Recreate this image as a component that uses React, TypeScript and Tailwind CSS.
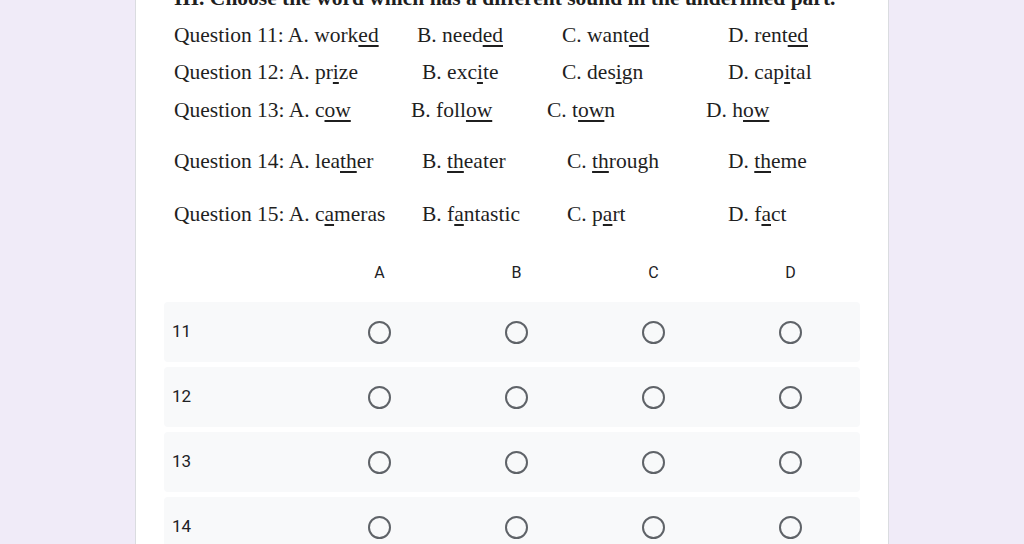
import React from 'react';

type Part = string | { u: string };
type Row = { cells: Part[][]; widths: number[]; top: number };

const rows: Row[] = [
    {
        top: 13,
        widths: [243, 145, 166],
        cells: [
            ['Question 11: A. work', { u: 'ed' }],
            ['B. need', { u: 'ed' }],
            ['C. want', { u: 'ed' }],
            ['D. rent', { u: 'ed' }],
        ],
    },
    {
        top: 13,
        widths: [248, 140, 166],
        cells: [
            ['Question 12: A. pr', { u: 'i' }, 'ze'],
            ['B. exc', { u: 'i' }, 'te'],
            ['C. des', { u: 'i' }, 'gn'],
            ['D. cap', { u: 'i' }, 'tal'],
        ],
    },
    {
        top: 14,
        widths: [237, 136, 159],
        cells: [
            ['Question 13: A. c', { u: 'ow' }],
            ['B. foll', { u: 'ow' }],
            ['C. t', { u: 'ow' }, 'n'],
            ['D. h', { u: 'ow' }],
        ],
    },
    {
        top: 27,
        widths: [248, 145, 161],
        cells: [
            ['Question 14: A. lea', { u: 'th' }, 'er'],
            ['B. ', { u: 'th' }, 'eater'],
            ['C. ', { u: 'th' }, 'rough'],
            ['D. ', { u: 'th' }, 'eme'],
        ],
    },
    {
        top: 29,
        widths: [248, 145, 161],
        cells: [
            ['Question 15: A. c', { u: 'a' }, 'meras'],
            ['B. f', { u: 'a' }, 'ntastic'],
            ['C. p', { u: 'a' }, 'rt'],
            ['D. f', { u: 'a' }, 'ct'],
        ],
    },
];

const Cell = ({ parts }: { parts: Part[] }) => (
    <>
        {parts.map((p, i) =>
            typeof p === 'string' ? (
                <span key={i}>{p}</span>
            ) : (
                <span key={i} className="underline decoration-2 underline-offset-[3px]">{p.u}</span>
            )
        )}
    </>
);

const Radio = () => (
    <div className="w-[23px] h-[23px] rounded-full border-2 border-[#5f6368]"></div>
);

const App = () => {
    const cols = ['A', 'B', 'C', 'D'];
    const labels = ['11', '12', '13', '14'];

    return (
        <div className="w-[1024px] h-[544px] overflow-hidden bg-[#f0ebf8]">
            <div className="ml-[135px] w-[754px] h-[560px] flex flex-col bg-white border-x border-[#dadce0] px-[28px]">
                <div className="pl-[10px] text-[21.5px] leading-[24px] text-[#1f1f1f] -mt-[14px]" style={{ fontFamily: '"Liberation Serif", "Times New Roman", serif' }}>
                    <div className="font-bold whitespace-nowrap">III. Choose the word which has a different sound in the underlined part.</div>
                    {rows.map((row, i) => (
                        <div key={i} className="flex whitespace-nowrap" style={{ marginTop: row.top }}>
                            {row.cells.map((c, j) => (
                                <div key={j} className="shrink-0" style={j < 3 ? { width: row.widths[j] } : undefined}>
                                    <Cell parts={c} />
                                </div>
                            ))}
                        </div>
                    ))}
                </div>

                <div className="mt-[25px] text-[#202124]" style={{ fontFamily: 'Roboto, Arial, sans-serif' }}>
                    <div className="flex h-[44px] items-center">
                        <div className="w-[147px]"></div>
                        {cols.map((c) => (
                            <div key={c} className="w-[137px] text-center text-[16px]">{c}</div>
                        ))}
                    </div>
                    <div className="mt-[7px] flex flex-col gap-[5px]">
                        {labels.map((l) => (
                            <div key={l} className="flex h-[60px] items-center bg-[#f8f9fa] rounded-sm">
                                <div className="w-[147px] pl-[8px] text-[17px]">{l}</div>
                                {cols.map((c) => (
                                    <div key={c} className="w-[137px] flex justify-center">
                                        <Radio />
                                    </div>
                                ))}
                            </div>
                        ))}
                    </div>
                </div>
            </div>
        </div>
    );
};

export default App;
